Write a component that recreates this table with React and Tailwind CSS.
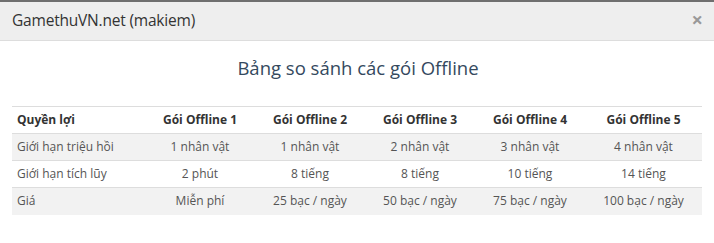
const packages = ['Gói Offline 1', 'Gói Offline 2', 'Gói Offline 3', 'Gói Offline 4', 'Gói Offline 5']

const rows = [
  { label: 'Giới hạn triệu hồi', values: ['1 nhân vật', '1 nhân vật', '2 nhân vật', '3 nhân vật', '4 nhân vật'] },
  { label: 'Giới hạn tích lũy', values: ['2 phút', '8 tiếng', '8 tiếng', '10 tiếng', '14 tiếng'] },
  { label: 'Giá', values: ['Miễn phí', '25 bạc / ngày', '50 bạc / ngày', '75 bạc / ngày', '100 bạc / ngày'] }
]

const colWidths = ['w-[133px]', 'w-[110px]', 'w-[110px]', 'w-[110px]', 'w-[110px]', 'w-[117px]']

const App = () => {
  return (
    <div className="min-h-screen bg-white font-['Open_Sans',sans-serif] border-t-2 border-[#6f6f6f]">
      {/* Modal header */}
      <div className="h-[39px] bg-[#eeeeee] border-b border-[#dddddd] flex items-center justify-between pl-3 pr-[11px]">
        <span className="text-[15.5px] text-[#333] tracking-[-0.2px]">GamethuVN.net (makiem)</span>
        <button className="text-[20px] leading-none font-bold text-[#999] pb-[2px]">×</button>
      </div>

      {/* Modal body */}
      <div className="px-3">
        <h2 className="text-center text-[18.5px] text-[#34495e] mt-[14px] mb-[25px] leading-[26px] pl-[2px]">
          Bảng so sánh các gói Offline
        </h2>

        <table className="w-[690px] border-collapse text-[12px] table-fixed">
          <thead>
            <tr className="border-t border-b border-[#dddddd] h-[27px]">
              <th className={`${colWidths[0]} text-left font-bold text-[#333] px-[5px]`}>Quyền lợi</th>
              {packages.map((p, i) => (
                <th key={p} className={`${colWidths[i + 1]} text-center font-bold text-[#333]`}>{p}</th>
              ))}
            </tr>
          </thead>
          <tbody>
            {rows.map((row, idx) => (
              <tr key={row.label} className={`h-[27px] border-b border-[#dddddd] last:border-b-0 ${idx % 2 === 0 ? 'bg-[#f2f2f2]' : 'bg-white'}`}>
                <td className="text-left text-[#555] px-[5px]">{row.label}</td>
                {row.values.map((v, i) => (
                  <td key={i} className="text-center text-[#555]">{v}</td>
                ))}
              </tr>
            ))}
          </tbody>
        </table>
      </div>
    </div>
  )
}

export default App
